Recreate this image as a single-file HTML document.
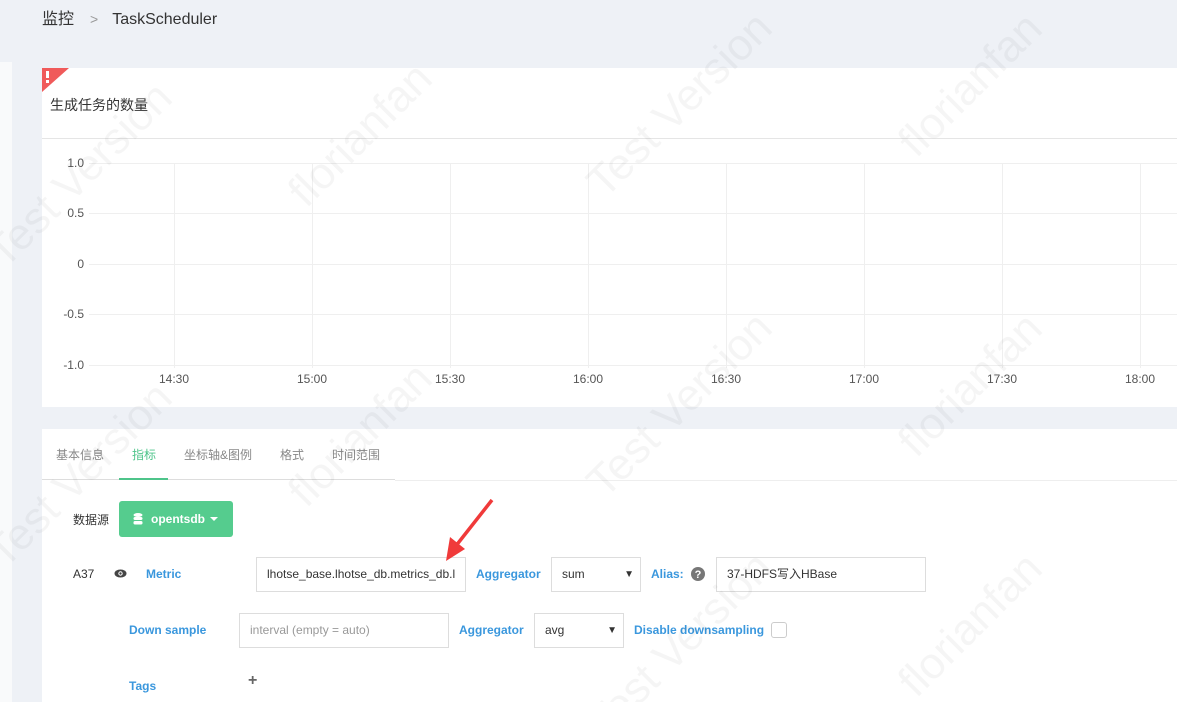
<!DOCTYPE html>
<html style="overflow:hidden;width:1177px;height:702px"><head><meta charset="utf-8"><style>
*{box-sizing:border-box;margin:0;padding:0}
body{width:1177px;height:702px;overflow:hidden;background:#eef1f6;font-family:"Liberation Sans","Noto Sans CJK SC",sans-serif;position:relative;color:#333}
.abs{position:absolute}
.lstrip{left:0;top:62px;width:12px;height:640px;background:#f9fafb}
.crumb{left:42px;top:6px;font-size:16px;color:#333;line-height:26px}
.panel{background:#fff}
.lbl{font-size:12px;color:#555}
.blue{color:#3a97dd;font-weight:bold;font-size:12px}
.inp{border:1px solid #ddd;background:#fff;font-size:12px;height:35px;line-height:33px;padding-left:10px;color:#333}
.tab{font-size:12px;color:#888;top:446px}
.gl{background:#efefef}
</style></head><body>
<div class="abs lstrip"></div>
<div class="abs crumb">监控<span style="color:#999;margin:0 14px 0 16px;font-size:14px">&gt;</span>TaskScheduler</div>
<div class="abs panel" style="left:42px;top:68px;width:1135px;height:339px"></div>
<svg class="abs" style="left:42px;top:68px" width="27" height="24"><polygon points="0,0 27,0 0,24" fill="#f05a5a"/><rect x="4" y="3" width="3" height="7" fill="#fff"/><rect x="4" y="12" width="3" height="3" fill="#fff"/></svg>
<div class="abs" style="left:50px;top:95px;font-size:14px;color:#333">生成任务的数量</div>
<div class="abs" style="left:42px;top:138px;width:1135px;height:1px;background:#e5e5e5"></div>
<div class="abs gl" style="left:89px;top:163px;width:1088px;height:1px"></div>
<div class="abs gl" style="left:89px;top:213px;width:1088px;height:1px"></div>
<div class="abs gl" style="left:89px;top:264px;width:1088px;height:1px"></div>
<div class="abs gl" style="left:89px;top:314px;width:1088px;height:1px"></div>
<div class="abs gl" style="left:89px;top:365px;width:1088px;height:1px"></div>
<div class="abs gl" style="left:174px;top:163px;width:1px;height:205px"></div>
<div class="abs gl" style="left:312px;top:163px;width:1px;height:205px"></div>
<div class="abs gl" style="left:450px;top:163px;width:1px;height:205px"></div>
<div class="abs gl" style="left:588px;top:163px;width:1px;height:205px"></div>
<div class="abs gl" style="left:726px;top:163px;width:1px;height:205px"></div>
<div class="abs gl" style="left:864px;top:163px;width:1px;height:205px"></div>
<div class="abs gl" style="left:1002px;top:163px;width:1px;height:205px"></div>
<div class="abs gl" style="left:1140px;top:163px;width:1px;height:205px"></div>
<div class="abs lbl" style="left:44px;top:156px;width:40px;text-align:right">1.0</div>
<div class="abs lbl" style="left:44px;top:206px;width:40px;text-align:right">0.5</div>
<div class="abs lbl" style="left:44px;top:257px;width:40px;text-align:right">0</div>
<div class="abs lbl" style="left:44px;top:307px;width:40px;text-align:right">-0.5</div>
<div class="abs lbl" style="left:44px;top:358px;width:40px;text-align:right">-1.0</div>
<div class="abs lbl" style="left:159px;top:372px">14:30</div>
<div class="abs lbl" style="left:297px;top:372px">15:00</div>
<div class="abs lbl" style="left:435px;top:372px">15:30</div>
<div class="abs lbl" style="left:573px;top:372px">16:00</div>
<div class="abs lbl" style="left:711px;top:372px">16:30</div>
<div class="abs lbl" style="left:849px;top:372px">17:00</div>
<div class="abs lbl" style="left:987px;top:372px">17:30</div>
<div class="abs lbl" style="left:1125px;top:372px">18:00</div>

<div class="abs panel" style="left:42px;top:429px;width:1135px;height:273px"></div>
<div class="abs tab" style="left:56px">基本信息</div>
<div class="abs tab" style="left:132px;color:#4ec48a">指标</div>
<div class="abs tab" style="left:184px">坐标轴&amp;图例</div>
<div class="abs tab" style="left:280px">格式</div>
<div class="abs tab" style="left:332px">时间范围</div>
<div class="abs" style="left:42px;top:479px;width:353px;height:1px;background:#ddd"></div>
<div class="abs" style="left:395px;top:480px;width:782px;height:1px;background:#eee"></div>
<div class="abs" style="left:119px;top:478px;width:49px;height:2px;background:#4ec48a"></div>

<div class="abs" style="left:73px;top:511px;font-size:12px;color:#333">数据源</div>
<div class="abs" style="left:119px;top:501px;width:114px;height:36px;background:#55cc8e;border-radius:3px;color:#fff;font-size:12px;font-weight:bold;line-height:36px">
<svg class="abs" style="left:14px;top:12px" width="10" height="12"><ellipse cx="5" cy="2" rx="4.5" ry="2" fill="#fff"/><rect x="0.5" y="4" width="9" height="3" rx="1.5" fill="#fff"/><rect x="0.5" y="8" width="9" height="3.5" rx="1.5" fill="#fff"/></svg>
<span style="position:absolute;left:32px">opentsdb</span>
<svg class="abs" style="left:91px;top:16px" width="8" height="5"><polygon points="0,0 8,0 4,4" fill="#fff"/></svg></div>

<div class="abs" style="left:73px;top:567px;font-size:12px;color:#333">A37</div>
<svg class="abs" style="left:114px;top:569px" width="13" height="9"><ellipse cx="6.5" cy="4.5" rx="6" ry="4" fill="#444"/><circle cx="6.5" cy="4.5" r="2.2" fill="#fff"/><circle cx="6.5" cy="4.5" r="1.2" fill="#444"/></svg>
<div class="abs blue" style="left:146px;top:567px">Metric</div>
<div class="abs inp" style="left:256px;top:557px;width:210px;white-space:nowrap;overflow:hidden">lhotse_base.lhotse_db.metrics_db.l</div>
<div class="abs blue" style="left:476px;top:567px">Aggregator</div>
<div class="abs inp" style="left:551px;top:557px;width:90px">sum<span style="position:absolute;right:6px;font-size:10px">▼</span></div>
<div class="abs blue" style="left:651px;top:567px">Alias:</div>
<svg class="abs" style="left:691px;top:567px" width="14" height="14"><circle cx="7" cy="7" r="7" fill="#777"/><text x="7" y="11" font-size="11" font-weight="bold" fill="#fff" text-anchor="middle" font-family="Liberation Sans">?</text></svg>
<div class="abs inp" style="left:716px;top:557px;width:210px;padding-left:10px">37-HDFS写入HBase</div>

<div class="abs blue" style="left:129px;top:623px">Down sample</div>
<div class="abs inp" style="left:239px;top:613px;width:210px;color:#999">interval (empty = auto)</div>
<div class="abs blue" style="left:459px;top:623px">Aggregator</div>
<div class="abs inp" style="left:534px;top:613px;width:90px">avg<span style="position:absolute;right:6px;font-size:10px">▼</span></div>
<div class="abs blue" style="left:634px;top:623px">Disable downsampling</div>
<div class="abs" style="left:771px;top:622px;width:16px;height:16px;border:1px solid #ccc;border-radius:3px;background:#fff"></div>

<div class="abs blue" style="left:129px;top:679px">Tags</div>
<div class="abs" style="left:248px;top:672px;font-size:16px;font-weight:bold;color:#666">+</div>

<svg class="abs" style="left:440px;top:495px" width="60" height="70"><line x1="52" y1="5" x2="15" y2="52" stroke="#f03a3a" stroke-width="3.5"/><polygon points="6,66 10,42 25,54" fill="#f03a3a"/></svg>

<div class="abs" style="left:0;top:0;width:1177px;height:702px;pointer-events:none;overflow:hidden;opacity:0.035;font-size:44px;color:#000">
<div class="abs" style="left:-40px;top:150px;transform:rotate(-45deg)">Test Version</div>
<div class="abs" style="left:270px;top:110px;transform:rotate(-45deg)">florianfan</div>
<div class="abs" style="left:560px;top:80px;transform:rotate(-45deg)">Test Version</div>
<div class="abs" style="left:880px;top:60px;transform:rotate(-45deg)">florianfan</div>
<div class="abs" style="left:-40px;top:450px;transform:rotate(-45deg)">Test Version</div>
<div class="abs" style="left:270px;top:410px;transform:rotate(-45deg)">florianfan</div>
<div class="abs" style="left:560px;top:380px;transform:rotate(-45deg)">Test Version</div>
<div class="abs" style="left:880px;top:360px;transform:rotate(-45deg)">florianfan</div>
<div class="abs" style="left:560px;top:620px;transform:rotate(-45deg)">Test Version</div>
<div class="abs" style="left:880px;top:600px;transform:rotate(-45deg)">florianfan</div>
</div>
</body></html>
